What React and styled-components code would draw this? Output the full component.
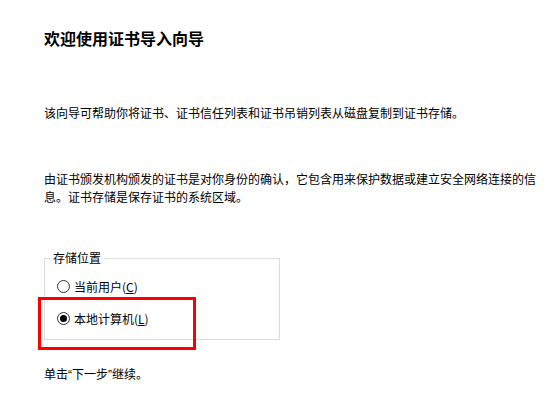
import styled, { createGlobalStyle } from 'styled-components';

const Global = createGlobalStyle`
  html, body {
    margin: 0;
    padding: 0;
    background: #fff;
  }
  body {
    font-family: "Noto Sans CJK SC", "Noto Sans", sans-serif;
    color: #000;
  }
`;

const Page = styled.div`
  position: relative;
  box-sizing: border-box;
  width: 548px;
  height: 396px;
  padding: 0 8px 0 44px;
  overflow: hidden;
`;

const Title = styled.h1`
  margin: 0;
  padding-top: 28px;
  font-size: 16px;
  line-height: 20px;
  font-weight: bold;
`;

const Text = styled.p`
  margin: ${({ $gap }) => $gap}px 0 0;
  font-size: 12px;
  line-height: 18px;
  width: 496px;
`;

const Quote = styled.span`
  font-family: "Liberation Sans", "Noto Sans CJK SC", sans-serif;
`;

const Group = styled.fieldset`
  box-sizing: border-box;
  width: 236px;
  margin: 44px 0 0;
  padding: 0 0 11px;
  border: 1px solid #dcdcdc;
  min-width: 0;
`;

const Legend = styled.legend`
  margin-left: 5px;
  padding: 0 3px;
  font-size: 12px;
  line-height: 16px;
`;

const Option = styled.label`
  display: flex;
  align-items: center;
  gap: 4px;
  height: 20px;
  margin-top: ${({ $gap }) => $gap}px;
  padding-left: 12px;
  font-size: 12px;
`;

const Radio = styled.span`
  box-sizing: border-box;
  width: 13px;
  height: 13px;
  border-radius: 50%;
  border: 1px solid #333;
  display: flex;
  align-items: center;
  justify-content: center;
  &::after {
    content: '';
    width: 7px;
    height: 7px;
    border-radius: 50%;
    background: #000;
    display: ${({ $checked }) => ($checked ? 'block' : 'none')};
  }
`;

const Key = styled.span`
  text-decoration: underline;
`;

const Highlight = styled.div`
  position: absolute;
  left: 38px;
  top: 297px;
  width: 158px;
  height: 53px;
  box-sizing: border-box;
  border: 3px solid #ff0000;
  pointer-events: none;
`;

export default function App() {
  return (
    <>
      <Global />
      <Page>
        <Title>欢迎使用证书导入向导</Title>
        <Text $gap={56}>该向导可帮助你将证书、证书信任列表和证书吊销列表从磁盘复制到证书存储。</Text>
        <Text $gap={48}>
          由证书颁发机构颁发的证书是对你身份的确认，它包含用来保护数据或建立安全网络连接的信息。证书存储是保存证书的系统区域。
        </Text>
        <Group>
          <Legend>存储位置</Legend>
          <Option $gap={10}>
            <Radio />
            <span>当前用户(<Key>C</Key>)</span>
          </Option>
          <Option $gap={12}>
            <Radio $checked />
            <span>本地计算机(<Key>L</Key>)</span>
          </Option>
        </Group>
        <Text $gap={25}>
          单击<Quote>“</Quote>下一步<Quote>”</Quote>继续。
        </Text>
        <Highlight />
      </Page>
    </>
  );
}
